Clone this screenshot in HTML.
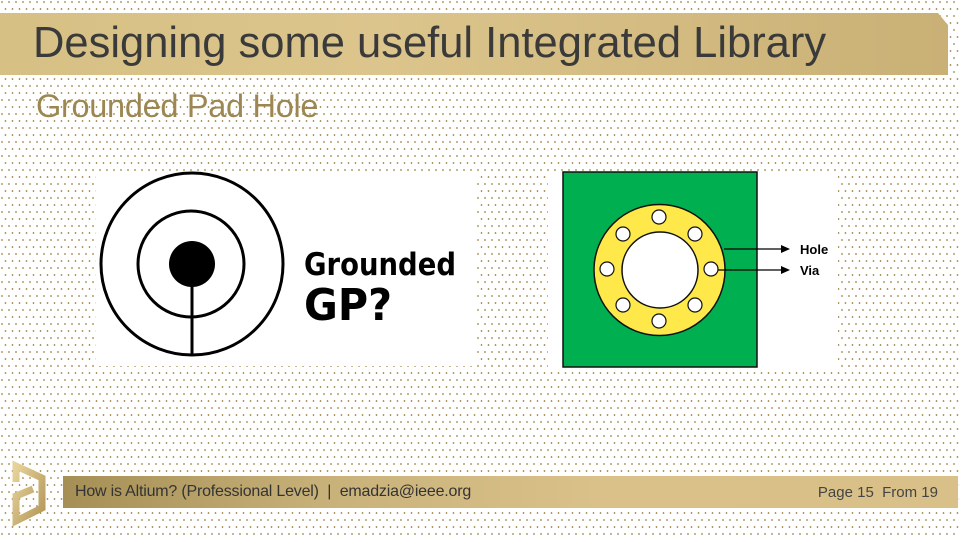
<!DOCTYPE html>
<html><head><meta charset="utf-8"><style>
html,body{margin:0;padding:0}
body{width:960px;height:540px;position:relative;overflow:hidden;background-color:#fff;
background-image:radial-gradient(circle,#a08448 0.7px,transparent 1px),radial-gradient(circle,#a08448 0.7px,transparent 1px);
background-size:7px 14px;background-position:2px 2px,5.5px 9px;font-family:"Liberation Sans",sans-serif}
.title{position:absolute;left:0;top:13px;width:948px;height:62px;background:linear-gradient(90deg,#d6c084,#dcc58c 40%,#c9b075);clip-path:polygon(0 0,938px 0,948px 12px,948px 62px,0 62px)}
.title span{position:absolute;left:33px;top:6px;font-size:43.5px;color:#3a3a3a}
.sub{position:absolute;left:36px;top:88px;font-size:32.5px;color:#9c8752;letter-spacing:-0.3px}
.foot{position:absolute;left:63px;top:476px;width:895px;height:32px;background:linear-gradient(90deg,#a58f55,#c9b27a 30%,#dac18a 60%,#d8c088)}
.foot .l{position:absolute;left:12px;top:7px;font-size:16px;color:#333;letter-spacing:-0.2px;white-space:nowrap}
.foot .r{position:absolute;right:20px;top:8px;font-size:15px;color:#444}
</style></head><body>
<div class="title"><span>Designing some useful Integrated Library</span></div>
<div class="sub">Grounded Pad Hole</div>

<svg style="position:absolute;left:0;top:0" width="960" height="540">
<rect x="96" y="171" width="380" height="195" fill="#fff"/>
<circle cx="192" cy="264" r="91" fill="none" stroke="#000" stroke-width="3"/>
<circle cx="191" cy="264" r="53" fill="none" stroke="#000" stroke-width="3"/>
<circle cx="192" cy="264" r="23" fill="#000"/>
<line x1="192" y1="280" x2="192" y2="356" stroke="#000" stroke-width="3"/>
<text x="304" y="275" font-family="DejaVu Sans,sans-serif" font-weight="bold" font-size="31" fill="#000" textLength="152" lengthAdjust="spacingAndGlyphs">Grounded</text>
<text x="304" y="320" font-family="DejaVu Sans,sans-serif" font-weight="bold" font-size="44" fill="#000" textLength="88" lengthAdjust="spacingAndGlyphs">GP?</text>

<rect x="548" y="171" width="290" height="196" fill="#fff"/>
<rect x="563" y="172" width="194" height="195" fill="#00b050" stroke="#111" stroke-width="1.5"/>
<circle cx="659.5" cy="270" r="65.5" fill="#ffe94a" stroke="#111" stroke-width="1.5"/>
<circle cx="660" cy="270" r="38" fill="#fff" stroke="#111" stroke-width="1.5"/>
<g fill="#fff" stroke="#111" stroke-width="1.2">
<circle cx="659" cy="217" r="7"/><circle cx="659" cy="321" r="7"/>
<circle cx="607" cy="269" r="7"/><circle cx="711" cy="269" r="7"/>
<circle cx="623" cy="234" r="7"/><circle cx="695" cy="234" r="7"/>
<circle cx="623" cy="305" r="7"/><circle cx="695" cy="305" r="7"/>
</g>
<g stroke="#000" stroke-width="1.3"><line x1="724" y1="249" x2="783" y2="249"/><line x1="718" y1="270" x2="783" y2="270"/></g>
<polygon points="790,249 781,245 781,253" fill="#000"/><polygon points="790,270 781,266 781,274" fill="#000"/>
<text x="800" y="254" font-weight="bold" font-size="13" fill="#000">Hole</text>
<text x="800" y="275" font-weight="bold" font-size="13" fill="#000">Via</text>

<defs><linearGradient id="g" x1="0" y1="0" x2="1" y2="1"><stop offset="0" stop-color="#e6d29a"/><stop offset="1" stop-color="#b49858"/></linearGradient></defs>
<polyline points="16,482 16,466 42,478 42,508 16,521 16,496 33,489" fill="none" stroke="url(#g)" stroke-width="7" stroke-linejoin="miter"/>
</svg>

<div class="foot"><span class="l">How is Altium? (Professional Level) &nbsp;| &nbsp;emadzia@ieee.org</span><span class="r">Page 15 &nbsp;From 19</span></div>
</body></html>
